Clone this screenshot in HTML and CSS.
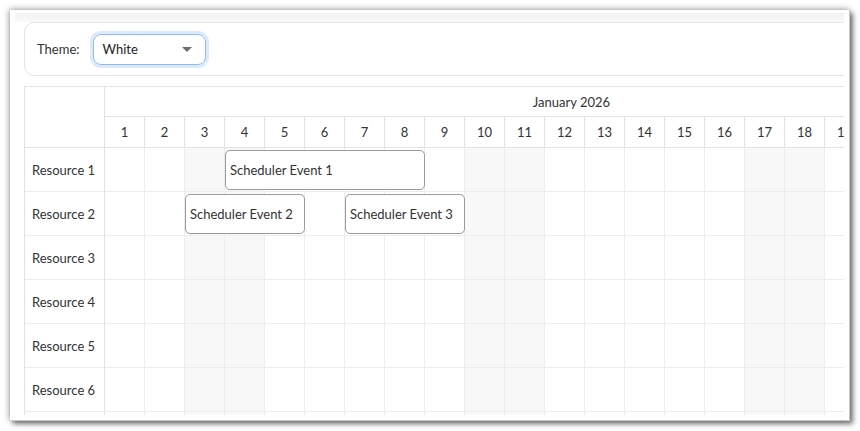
FILE: index.html
```html
<!DOCTYPE html>
<html>
<head>
<meta charset="utf-8">
<link rel="stylesheet" href="styles.css">
</head>
<body>
<div class="frame">
  <div class="viewport">
    <div class="content">
      <div class="toolbar">
        <span class="label">Theme:</span>
        <div class="select">
          <span>White</span>
          <svg class="caret" width="10" height="5" viewBox="0 0 10 5"><polygon points="0,0 10,0 5,5" fill="#6e6e6e"/></svg>
        </div>
      </div>
      <div class="scheduler">
        <div class="corner"></div>
        <div class="timeheader">
          <div class="month">January 2026</div>
          <div class="days">
            <div class="d">1</div><div class="d">2</div><div class="d">3</div><div class="d">4</div><div class="d">5</div><div class="d">6</div><div class="d">7</div><div class="d">8</div><div class="d">9</div><div class="d">10</div><div class="d">11</div><div class="d">12</div><div class="d">13</div><div class="d">14</div><div class="d">15</div><div class="d">16</div><div class="d">17</div><div class="d">18</div><div class="d">19</div><div class="d">20</div><div class="d">21</div><div class="d">22</div><div class="d">23</div><div class="d">24</div><div class="d">25</div><div class="d">26</div><div class="d">27</div><div class="d">28</div><div class="d">29</div><div class="d">30</div><div class="d">31</div>
          </div>
        </div>
        <div class="resources">
          <div class="res">Resource 1</div>
          <div class="res">Resource 2</div>
          <div class="res">Resource 3</div>
          <div class="res">Resource 4</div>
          <div class="res">Resource 5</div>
          <div class="res">Resource 6</div>
          <div class="res">Resource 7</div>
        </div>
        <div class="rows">
          <div class="row">
            <div class="c"></div><div class="c"></div><div class="c we"></div><div class="c we"></div><div class="c"></div><div class="c"></div><div class="c"></div><div class="c"></div><div class="c"></div><div class="c we"></div><div class="c we"></div><div class="c"></div><div class="c"></div><div class="c"></div><div class="c"></div><div class="c"></div><div class="c we"></div><div class="c we"></div><div class="c"></div><div class="c"></div><div class="c"></div>
            <div class="event ev1">Scheduler Event 1</div>
          </div>
          <div class="row">
            <div class="c"></div><div class="c"></div><div class="c we"></div><div class="c we"></div><div class="c"></div><div class="c"></div><div class="c"></div><div class="c"></div><div class="c"></div><div class="c we"></div><div class="c we"></div><div class="c"></div><div class="c"></div><div class="c"></div><div class="c"></div><div class="c"></div><div class="c we"></div><div class="c we"></div><div class="c"></div><div class="c"></div><div class="c"></div>
            <div class="event ev2">Scheduler Event 2</div>
            <div class="event ev3">Scheduler Event 3</div>
          </div>
          <div class="row">
            <div class="c"></div><div class="c"></div><div class="c we"></div><div class="c we"></div><div class="c"></div><div class="c"></div><div class="c"></div><div class="c"></div><div class="c"></div><div class="c we"></div><div class="c we"></div><div class="c"></div><div class="c"></div><div class="c"></div><div class="c"></div><div class="c"></div><div class="c we"></div><div class="c we"></div><div class="c"></div><div class="c"></div><div class="c"></div>
          </div>
          <div class="row">
            <div class="c"></div><div class="c"></div><div class="c we"></div><div class="c we"></div><div class="c"></div><div class="c"></div><div class="c"></div><div class="c"></div><div class="c"></div><div class="c we"></div><div class="c we"></div><div class="c"></div><div class="c"></div><div class="c"></div><div class="c"></div><div class="c"></div><div class="c we"></div><div class="c we"></div><div class="c"></div><div class="c"></div><div class="c"></div>
          </div>
          <div class="row">
            <div class="c"></div><div class="c"></div><div class="c we"></div><div class="c we"></div><div class="c"></div><div class="c"></div><div class="c"></div><div class="c"></div><div class="c"></div><div class="c we"></div><div class="c we"></div><div class="c"></div><div class="c"></div><div class="c"></div><div class="c"></div><div class="c"></div><div class="c we"></div><div class="c we"></div><div class="c"></div><div class="c"></div><div class="c"></div>
          </div>
          <div class="row">
            <div class="c"></div><div class="c"></div><div class="c we"></div><div class="c we"></div><div class="c"></div><div class="c"></div><div class="c"></div><div class="c"></div><div class="c"></div><div class="c we"></div><div class="c we"></div><div class="c"></div><div class="c"></div><div class="c"></div><div class="c"></div><div class="c"></div><div class="c we"></div><div class="c we"></div><div class="c"></div><div class="c"></div><div class="c"></div>
          </div>
          <div class="row">
            <div class="c"></div><div class="c"></div><div class="c we"></div><div class="c we"></div><div class="c"></div><div class="c"></div><div class="c"></div><div class="c"></div><div class="c"></div><div class="c we"></div><div class="c we"></div><div class="c"></div><div class="c"></div><div class="c"></div><div class="c"></div><div class="c"></div><div class="c we"></div><div class="c we"></div><div class="c"></div><div class="c"></div><div class="c"></div>
          </div>
        </div>
      </div>
    </div>
  </div>
</div>
</body>
</html>
```

FILE: styles.css
```css
* { box-sizing: border-box; }

html { background: #fff; }

body {
  margin: 0;
  padding: 10px;
  background: #fff;
  font-family: Lato, "Liberation Sans", sans-serif;
  font-size: 13px;
  color: #333;
}

.frame {
  position: relative;
  width: 840px;
  height: 411px;
  background: #fff;
  padding: 3px 5px 5px 5px;
  border-right: 1px solid #c8c8c8;
  border-bottom: 1px solid #c8c8c8;
  box-shadow: 3px 3px 5px rgba(0, 0, 0, 0.5), -1px -1px 6px rgba(0, 0, 0, 0.35);
}

.viewport {
  height: 100%;
  overflow: hidden;
  padding: 9px 0 0 9px;
  background: linear-gradient(#f1f1f1, #fafafa 9px, #fff 9px);
}

.content {
  width: 1014px;
}

.toolbar {
  height: 54px;
  border: 1px solid #e4e4e4;
  border-radius: 10px;
  background: #fff;
  display: flex;
  align-items: center;
  padding-left: 12px;
  gap: 13px;
}

.select {
  width: 113px;
  height: 31px;
  border: 1px solid #8fbaf5;
  border-radius: 8px;
  box-shadow: 0 0 0 3px #dde9fd;
  display: flex;
  align-items: center;
  justify-content: space-between;
  padding: 0 13px 0 9px;
  color: #222;
}

.caret { display: block; }

.scheduler {
  margin-top: 10px;
  display: grid;
  grid-template-columns: 80px 933px;
  border-top: 1px solid #e2e2e2;
  border-left: 1px solid #e2e2e2;
}

.corner {
  border-right: 1px solid #e2e2e2;
  border-bottom: 1px solid #e2e2e2;
}

.timeheader { overflow: hidden; }

.month {
  height: 30px;
  border-bottom: 1px solid #e2e2e2;
  display: flex;
  align-items: center;
  justify-content: center;
}

.days {
  display: flex;
  height: 31px;
}

.d {
  flex: 0 0 40px;
  border-right: 1px solid #e2e2e2;
  border-bottom: 1px solid #e2e2e2;
  display: flex;
  align-items: center;
  justify-content: center;
}

.resources {
  border-right: 1px solid #e2e2e2;
}

.res {
  height: 44px;
  border-bottom: 1px solid #ececec;
  display: flex;
  align-items: center;
  padding-left: 7px;
}

.rows { overflow: hidden; }

.row {
  position: relative;
  display: flex;
  height: 44px;
}

.c {
  flex: 0 0 40px;
  border-right: 1px solid #ededed;
  border-bottom: 1px solid #ededed;
}

.c.we { background: #f8f8f8; }

.event {
  position: absolute;
  top: 2px;
  height: 40px;
  background: #fff;
  border: 1px solid #9a9a9a;
  border-radius: 5px;
  display: flex;
  align-items: center;
  padding-left: 4px;
  white-space: nowrap;
}

.ev1 { left: 120px; width: 200px; }
.ev2 { left: 80px; width: 120px; }
.ev3 { left: 240px; width: 120px; }
```
